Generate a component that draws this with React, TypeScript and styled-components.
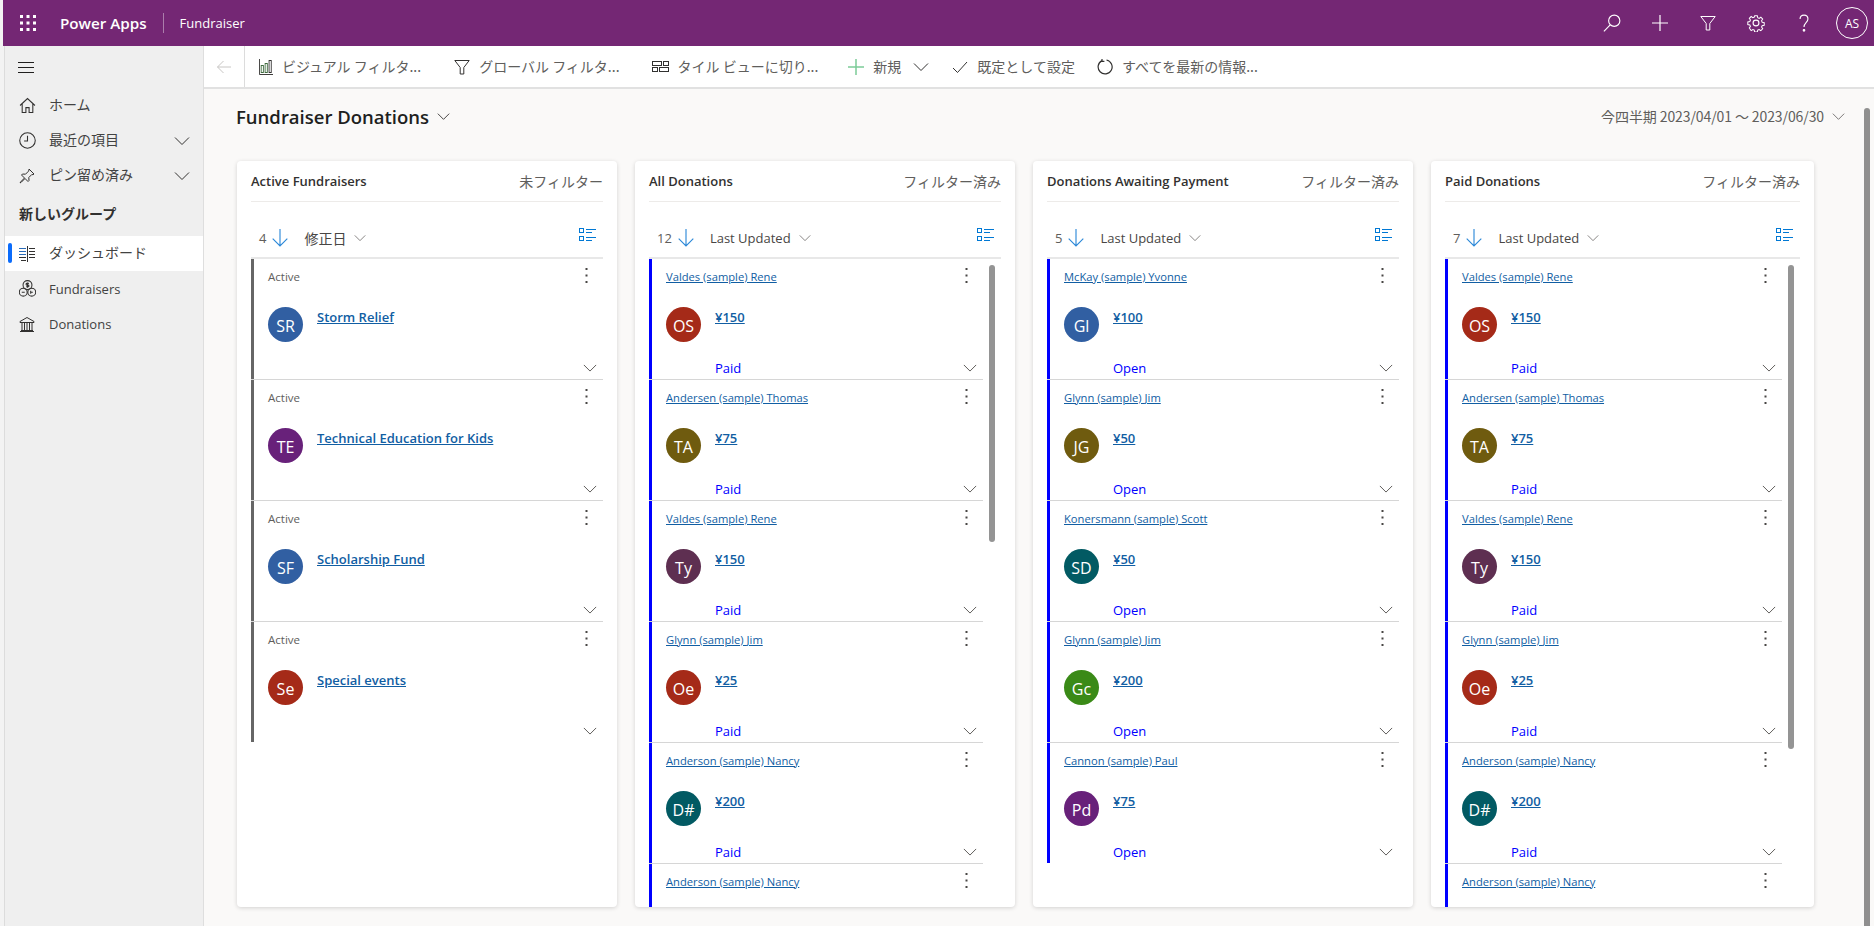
import React from "react";
import styled, { createGlobalStyle } from "styled-components";

const LATIN = `"Open Sans", "Noto Sans CJK JP", sans-serif`;
const JP = `"Noto Sans CJK JP", "Open Sans", sans-serif`;

const GlobalStyle = createGlobalStyle`
  html, body {
    margin: 0;
    padding: 0;
    height: 100%;
    overflow: hidden;
  }
  #root {
    height: 100%;
  }
  * {
    box-sizing: border-box;
  }
`;

const Page = styled.div`
  display: flex;
  flex-direction: column;
  height: 926px;
  padding-left: 4px;
  background: #f3f3f3;
  font-family: ${LATIN};
  color: #323130;
`;

const TopBar = styled.header`
  display: flex;
  align-items: center;
  flex: 0 0 46px;
  margin-left: -1px;
  padding: 0 6px 0 17px;
  background: #742774;
  color: #fff;
`;

const Waffle = styled.svg`
  width: 16px;
  height: 16px;
  margin-right: 24px;
`;

const Brand = styled.div`
  font-size: 15.2px;
  font-weight: 600;
  padding-right: 16px;
  line-height: 20px;
  border-right: 1px solid rgba(255, 255, 255, 0.4);
`;

const AppName = styled.div`
  font-size: 13px;
  margin-left: 16px;
  flex: 1;
`;

const HeaderButton = styled.div`
  display: flex;
  align-items: center;
  justify-content: center;
  width: 48px;
  height: 46px;
`;

const UserBadge = styled.div`
  display: flex;
  align-items: center;
  justify-content: center;
  width: 32px;
  height: 32px;
  margin-left: 8px;
  border: 1px solid #fff;
  border-radius: 50%;
  font-size: 12px;
`;

const Body = styled.div`
  display: flex;
  flex: 1;
  min-height: 0;
`;

const SideNav = styled.nav`
  flex: 0 0 200px;
  background: #efefef;
  border-left: 1px solid #dcdcdc;
  border-right: 1px solid #dedede;
`;

const MenuRow = styled.div`
  display: flex;
  align-items: center;
  height: 42px;
  padding-left: 13px;
`;

const NavRow = styled.div<{ $active?: boolean }>`
  position: relative;
  display: flex;
  align-items: center;
  height: 35px;
  padding: 0 13px;
  background: ${(p) => (p.$active ? "#fff" : "transparent")};
  &::before {
    content: "";
    display: ${(p) => (p.$active ? "block" : "none")};
    position: absolute;
    left: 3px;
    top: 7px;
    width: 4px;
    height: 20px;
    border-radius: 2px;
    background: #0b6cfb;
  }
`;

const NavIcon = styled.span`
  display: flex;
  align-items: center;
  justify-content: center;
  width: 18px;
  margin-right: 13px;
  color: #323130;
`;

const NavLabel = styled.span<{ $jp?: boolean }>`
  flex: 1;
  padding-bottom: ${(p) => (p.$jp ? "3px" : "0")};
  font-family: ${(p) => (p.$jp ? JP : LATIN)};
  font-size: ${(p) => (p.$jp ? "14px" : "13px")};
  color: #424242;
`;

const NavGroupTitle = styled.div`
  display: flex;
  align-items: center;
  height: 43px;
  padding: 0 0 3px 14px;
  font-family: ${JP};
  font-size: 14px;
  font-weight: 700;
  color: #323130;
`;

const Main = styled.main`
  position: relative;
  display: flex;
  flex-direction: column;
  flex: 1;
  min-width: 0;
  background: #faf9f8;
`;

const CommandBar = styled.div`
  display: flex;
  align-items: center;
  flex: 0 0 43px;
  background: #fff;
  border-bottom: 2px solid #e1e1e1;
`;

const BackButton = styled.div`
  display: flex;
  align-items: center;
  justify-content: center;
  width: 41px;
  height: 41px;
  margin-right: 14px;
  border-right: 1px solid #dcdcdc;
  color: #c8c6c4;
`;

const CommandButton = styled.div<{ $after: number }>`
  display: flex;
  align-items: center;
  gap: 9px;
  margin-right: ${(p) => p.$after}px;
  white-space: nowrap;
`;

const CommandLabel = styled.span`
  padding-bottom: 2px;
  font-family: ${JP};
  font-size: 14px;
  color: #605e5c;
`;

const CommandIcon = styled.span`
  display: flex;
  color: #323130;
`;

const Content = styled.div`
  display: flex;
  flex-direction: column;
  flex: 1;
  min-height: 0;
  padding-left: 33px;
`;

const DashHeader = styled.div`
  display: flex;
  align-items: center;
  justify-content: space-between;
  flex: 0 0 72px;
  padding: 0 29px 18px 0;
`;

const DashTitle = styled.div`
  display: flex;
  align-items: center;
  gap: 8px;
  margin-left: -1px;
  font-size: 18.5px;
  font-weight: 600;
  color: #201f1e;
`;

const DateRange = styled.div`
  display: flex;
  align-items: center;
  gap: 8px;
  font-family: ${JP};
  font-size: 14px;
  letter-spacing: -0.1px;
  color: #605e5c;
`;

const Board = styled.div`
  display: grid;
  grid-template-columns: repeat(3, 380px) 383px;
  gap: 18px;
  height: 746px;
`;

const Card = styled.section`
  display: flex;
  flex-direction: column;
  min-width: 0;
  padding: 0 14px;
  background: #fff;
  border-radius: 4px;
  box-shadow: 0 1px 4px rgba(0, 0, 0, 0.16);
  overflow: hidden;
`;

const CardHead = styled.div`
  display: flex;
  align-items: center;
  justify-content: space-between;
  flex: 0 0 41px;
  border-bottom: 1px solid #edebe9;
`;

const CardTitle = styled.div`
  font-size: 13px;
  font-weight: 600;
  color: #323130;
`;

const FilterState = styled.div`
  font-family: ${JP};
  font-size: 14px;
  color: #605e5c;
`;

const SortRow = styled.div`
  display: flex;
  align-items: center;
  flex: 0 0 57px;
  padding: 16px 7px 0 8px;
  border-bottom: 2px solid #e8e8e8;
  font-size: 13px;
`;

const SortCount = styled.span`
  color: #605e5c;
  margin-right: 5px;
`;

const SortArrow = styled.span`
  display: flex;
  color: #2b88d8;
  margin-right: 15px;
`;

const SortField = styled.span<{ $jp?: boolean }>`
  font-family: ${(p) => (p.$jp ? JP : LATIN)};
  font-size: ${(p) => (p.$jp ? "14px" : "13px")};
  color: #484644;
  margin-right: 8px;
`;

const SortChevron = styled.span`
  display: flex;
  flex: 1;
  color: #605e5c;
`;

const ViewToggle = styled.span`
  display: flex;
  margin-top: -6px;
  color: #0078d4;
`;

const List = styled.div<{ $scroll?: boolean }>`
  position: relative;
  flex: 1;
  min-height: 0;
  padding-right: ${(p) => (p.$scroll ? "18px" : "0")};
`;

const ScrollThumb = styled.div<{ $height: number }>`
  position: absolute;
  top: 6px;
  right: 6px;
  width: 6px;
  height: ${(p) => p.$height}px;
  border-radius: 3px;
  background: #949494;
`;

const Item = styled.article`
  height: 121px;
  border-bottom: 1px solid #d6d6d6;
  &:last-of-type {
    border-bottom: none;
  }
`;

const ItemBody = styled.div<{ $accent: string }>`
  height: 120px;
  padding: 0 6px 0 14px;
  border-left: 3px solid ${(p) => p.$accent};
`;

const ItemTop = styled.div`
  display: flex;
  align-items: center;
  justify-content: space-between;
  height: 34px;
  padding-right: 9px;
`;

const StateText = styled.span`
  font-size: 11.5px;
  color: #605e5c;
`;

const OwnerLink = styled.a`
  font-size: 11.2px;
  color: #115ea3;
  text-decoration: underline;
`;

const Kebab = styled.svg`
  width: 3px;
  height: 15px;
  margin-top: -2px;
  color: #484644;
`;

const ItemMiddle = styled.div`
  display: flex;
  gap: 14px;
  height: 35px;
  margin-top: 14px;
`;

const Avatar = styled.div<{ $bg: string }>`
  display: flex;
  align-items: center;
  justify-content: center;
  flex: 0 0 35px;
  height: 35px;
  border-radius: 50%;
  background: ${(p) => p.$bg};
  color: #fff;
  font-size: 16px;
  padding-top: 2px;
`;

const MainLink = styled.a`
  font-size: 13px;
  font-weight: 600;
  line-height: 20px;
  color: #115ea3;
  text-decoration: underline;
  height: 20px;
`;

const ItemBottom = styled.div`
  display: flex;
  align-items: center;
  justify-content: flex-end;
  height: 24px;
  margin-top: 14px;
  color: #484644;
`;

const StatusText = styled.span`
  flex: 1;
  margin-left: 49px;
  font-size: 13px;
  color: #0000ff;
`;

const PageScroll = styled.div`
  position: absolute;
  top: 62px;
  right: 4px;
  bottom: 0;
  width: 6px;
  border-radius: 3px 3px 0 0;
  background: #8f8f8f;
`;

type IconProps = { size?: number };

const Line = ({ size = 16, children }: IconProps & { children: React.ReactNode }) => (
  <svg width={size} height={size} viewBox="0 0 16 16" fill="none" stroke="currentColor" strokeWidth="1">
    {children}
  </svg>
);

const ChevronDown = ({ size = 16 }: IconProps) => (
  <Line size={size}>
    <path d="M1 4.5l7 7 7-7" />
  </Line>
);

const WaffleIcon = () => (
  <Waffle viewBox="0 0 16 16" fill="currentColor">
    {[0, 6.5, 13].map((y) =>
      [0, 6.5, 13].map((x) => <rect key={`${x}-${y}`} x={x} y={y} width="3" height="3" />)
    )}
  </Waffle>
);

const HamburgerIcon = () => (
  <svg width="16" height="12" viewBox="0 0 16 12" stroke="#201f1e" strokeWidth="1">
    <path d="M0 1.5h16M0 6.5h16M0 11.5h16" />
  </svg>
);

const HomeIcon = () => (
  <Line size={17}>
    <path d="M1 8l7-6.5L15 8M3 6.5v8h3.5v-4.5h3v4.5H13v-8" />
  </Line>
);

const ClockIcon = () => (
  <Line size={17}>
    <circle cx="8" cy="8" r="7.3" />
    <path d="M8 3.5V8.5H4.8" />
  </Line>
);

const PinIcon = () => (
  <Line>
    <path d="M10 1l5 5-1 .7-1.2-.2-3 3 .2 3-1 1-3-3-3.5 3.5L1 15l1-1.5L5.5 10l-3-3 1-1 3 .2 3-3L10 2z" />
  </Line>
);

const DashboardIcon = () => (
  <svg width="16" height="16" viewBox="0 0 16 16" fill="none" strokeWidth="1">
    <path d="M8.5 0v16" stroke="#323130" />
    <path d="M0 2.5h7M0 5.5h7M0 8.5h7" stroke="#2b6cb8" />
    <path d="M10 2.5h6M10 5.5h6M10 8.5h6M10 11.5h6" stroke="#323130" />
    <path d="M0 11.5h7M2 14.5h5" stroke="#323130" />
  </svg>
);

const FundraiserIcon = () => (
  <Line size={17}>
    <circle cx="8" cy="4.8" r="4.2" />
    <circle cx="4" cy="11.5" r="3.7" />
    <circle cx="12" cy="11.5" r="3.7" />
    <path d="M9.3 3.2H7.4c-1 0-1 1.6 0 1.6h1.2c1 0 1 1.6 0 1.6H6.7M8 2.4v4.8M2.6 11.5h2.8M11 10v3M11 11.5h2" />
  </Line>
);

const BankIcon = () => (
  <Line>
    <path d="M1 5.5L8 1.5l7 4v1H1zM2 14.5h12M1 15.5h14M3 7v7M5.5 7v7M8 7v7M10.5 7v7M13 7v7" />
  </Line>
);

const BackIcon = () => (
  <Line>
    <path d="M15 8H1.5M7.5 2L1.5 8l6 6" />
  </Line>
);

const BarsIcon = () => (
  <svg width="14" height="16" viewBox="0 0 16 16" fill="none" stroke="#323130" strokeWidth="1" preserveAspectRatio="none">
    <path d="M0.5 0v15.5H16" />
    <rect x="2.5" y="6.5" width="2.5" height="7" stroke="#3f6b3f" />
    <rect x="7" y="4.5" width="2.5" height="9" stroke="#3f6b3f" />
    <rect x="11.5" y="1.5" width="2.5" height="12" />
  </svg>
);

const FilterIcon = () => (
  <Line>
    <path d="M0.8 1.5h14.4L9.8 8.5v6.5H6.2V8.5z" />
  </Line>
);

const TileIcon = () => (
  <svg width="17" height="11" viewBox="0 0 17 11" fill="none" stroke="currentColor" strokeWidth="1">
    <rect x="0.5" y="0.5" width="9" height="4" />
    <rect x="11.5" y="0.5" width="5" height="4" />
    <rect x="0.5" y="6.5" width="5" height="4" />
    <rect x="7.5" y="6.5" width="9" height="4" />
  </svg>
);

const PlusIcon = () => (
  <svg width="16" height="16" viewBox="0 0 16 16" stroke="#7ccb98" strokeWidth="1.5">
    <path d="M8 0v16M0 8h16" />
  </svg>
);

const CheckIcon = () => (
  <Line>
    <path d="M1 9l4.5 4.5L15 3" />
  </Line>
);

const RefreshIcon = () => (
  <Line>
    <path d="M5 1.6A7 7 0 1 0 9.5 1M5 0v2.4h2.4" strokeWidth="1.2" />
  </Line>
);

const SearchIcon = () => (
  <Line size={18}>
    <circle cx="10" cy="6" r="5" />
    <path d="M6.4 9.6L0.8 15.4" />
  </Line>
);

const GearIcon = () => (
  <Line size={18}>
    <circle cx="8" cy="8" r="2.6" />
    <path d="M6.7 .8h2.6l.4 2 1.4.6 1.7-1.1 1.8 1.8-1.1 1.7.6 1.4 2 .4v2.6l-2 .4-.6 1.4 1.1 1.7-1.8 1.8-1.7-1.1-1.4.6-.4 2H6.7l-.4-2-1.4-.6-1.7 1.1L1.4 13l1.1-1.7-.6-1.4-2-.4V6.9l2-.4.6-1.4L1.4 3.4 3.2 1.6l1.7 1.1 1.4-.6z" transform="translate(.8 .8) scale(.9)" />
  </Line>
);

const HelpIcon = () => (
  <Line size={18}>
    <path d="M4.5 4.5C4.5 2.5 6 1 8 1s3.5 1.5 3.5 3.5c0 3-3.5 3.5-3.5 7" />
    <circle cx="8" cy="14.5" r=".7" fill="currentColor" />
  </Line>
);

const ArrowDownIcon = () => (
  <Line size={18}>
    <path d="M8 0v15M1.5 8.5L8 15l6.5-6.5" />
  </Line>
);

const ListToggleIcon = () => (
  <svg width="17" height="13" viewBox="0 0 17 13" fill="none" stroke="currentColor" strokeWidth="1">
    <rect x="0.5" y="0.5" width="4" height="4" />
    <rect x="0.5" y="8.5" width="4" height="4" />
    <path d="M7 1.5h10M7 4.5h6M7 9.5h10M7 12.5h6" />
  </svg>
);

const KebabIcon = () => (
  <Kebab viewBox="0 0 3 15" fill="currentColor">
    <rect x="0.5" y="0" width="2" height="2" />
    <rect x="0.5" y="6.5" width="2" height="2" />
    <rect x="0.5" y="13" width="2" height="2" />
  </Kebab>
);

const BLUE = "#315fa2";
const PURPLE = "#68217a";
const RED = "#a52a18";
const OLIVE = "#6f5b0f";
const PLUM = "#5e2f51";
const TEAL = "#025a63";
const GREEN = "#3a8a17";

// a row without initials is the one cut by the card's bottom edge: only its top line shows
type Row = { top: string; topLink: boolean; initials?: string; color?: string; main?: string; status?: string };

const fundraisers: Row[] = [
  { top: "Active", topLink: false, initials: "SR", color: BLUE, main: "Storm Relief" },
  { top: "Active", topLink: false, initials: "TE", color: PURPLE, main: "Technical Education for Kids" },
  { top: "Active", topLink: false, initials: "SF", color: BLUE, main: "Scholarship Fund" },
  { top: "Active", topLink: false, initials: "Se", color: RED, main: "Special events" },
];

const paid: Row[] = [
  { top: "Valdes (sample) Rene", topLink: true, initials: "OS", color: RED, main: "¥150", status: "Paid" },
  { top: "Andersen (sample) Thomas", topLink: true, initials: "TA", color: OLIVE, main: "¥75", status: "Paid" },
  { top: "Valdes (sample) Rene", topLink: true, initials: "Ty", color: PLUM, main: "¥150", status: "Paid" },
  { top: "Glynn (sample) Jim", topLink: true, initials: "Oe", color: RED, main: "¥25", status: "Paid" },
  { top: "Anderson (sample) Nancy", topLink: true, initials: "D#", color: TEAL, main: "¥200", status: "Paid" },
  { top: "Anderson (sample) Nancy", topLink: true },
];

const awaiting: Row[] = [
  { top: "McKay (sample) Yvonne", topLink: true, initials: "Gl", color: BLUE, main: "¥100", status: "Open" },
  { top: "Glynn (sample) Jim", topLink: true, initials: "JG", color: OLIVE, main: "¥50", status: "Open" },
  { top: "Konersmann (sample) Scott", topLink: true, initials: "SD", color: TEAL, main: "¥50", status: "Open" },
  { top: "Glynn (sample) Jim", topLink: true, initials: "Gc", color: GREEN, main: "¥200", status: "Open" },
  { top: "Cannon (sample) Paul", topLink: true, initials: "Pd", color: PURPLE, main: "¥75", status: "Open" },
];

type Column = {
  title: string;
  filter: string;
  count: number;
  field: string;
  jpField?: boolean;
  accent: string;
  rows: Row[];
  thumb?: number;
};

const columns: Column[] = [
  { title: "Active Fundraisers", filter: "未フィルター", count: 4, field: "修正日", jpField: true, accent: "#666666", rows: fundraisers },
  { title: "All Donations", filter: "フィルター済み", count: 12, field: "Last Updated", accent: "#0000ff", rows: paid, thumb: 277 },
  { title: "Donations Awaiting Payment", filter: "フィルター済み", count: 5, field: "Last Updated", accent: "#0000ff", rows: awaiting },
  { title: "Paid Donations", filter: "フィルター済み", count: 7, field: "Last Updated", accent: "#0000ff", rows: paid, thumb: 484 },
];

const commands = [
  { icon: <BarsIcon />, label: "ビジュアル フィルタ...", after: 33 },
  { icon: <FilterIcon />, label: "グローバル フィルタ...", after: 32 },
  { icon: <TileIcon />, label: "タイル ビューに切り...", after: 30 },
];

function BoardCard({ column }: { column: Column }) {
  return (
    <Card>
      <CardHead>
        <CardTitle>{column.title}</CardTitle>
        <FilterState>{column.filter}</FilterState>
      </CardHead>
      <SortRow>
        <SortCount>{column.count}</SortCount>
        <SortArrow>
          <ArrowDownIcon />
        </SortArrow>
        <SortField $jp={column.jpField}>{column.field}</SortField>
        <SortChevron>
          <ChevronDown size={12} />
        </SortChevron>
        <ViewToggle>
          <ListToggleIcon />
        </ViewToggle>
      </SortRow>
      <List $scroll={!!column.thumb}>
        {column.rows.map((row, i) => (
          <Item key={i}>
            <ItemBody $accent={column.accent}>
              <ItemTop>
                {row.topLink ? <OwnerLink>{row.top}</OwnerLink> : <StateText>{row.top}</StateText>}
                <KebabIcon />
              </ItemTop>
              {row.initials && (
                <>
                  <ItemMiddle>
                    <Avatar $bg={row.color!}>{row.initials}</Avatar>
                    <MainLink>{row.main}</MainLink>
                  </ItemMiddle>
                  <ItemBottom>
                    {row.status && <StatusText>{row.status}</StatusText>}
                    <ChevronDown size={14} />
                  </ItemBottom>
                </>
              )}
            </ItemBody>
          </Item>
        ))}
        {column.thumb && <ScrollThumb $height={column.thumb} />}
      </List>
    </Card>
  );
}

export default function App() {
  return (
    <Page>
      <GlobalStyle />
      <TopBar>
        <WaffleIcon />
        <Brand>Power Apps</Brand>
        <AppName>Fundraiser</AppName>
        <HeaderButton>
          <SearchIcon />
        </HeaderButton>
        <HeaderButton>
          <svg width="16" height="16" viewBox="0 0 16 16" stroke="currentColor" strokeWidth="1.2">
            <path d="M8 0v16M0 8h16" />
          </svg>
        </HeaderButton>
        <HeaderButton>
          <FilterIcon />
        </HeaderButton>
        <HeaderButton>
          <GearIcon />
        </HeaderButton>
        <HeaderButton>
          <HelpIcon />
        </HeaderButton>
        <UserBadge>AS</UserBadge>
      </TopBar>
      <Body>
        <SideNav>
          <MenuRow>
            <HamburgerIcon />
          </MenuRow>
          <NavRow>
            <NavIcon>
              <HomeIcon />
            </NavIcon>
            <NavLabel $jp>ホーム</NavLabel>
          </NavRow>
          <NavRow>
            <NavIcon>
              <ClockIcon />
            </NavIcon>
            <NavLabel $jp>最近の項目</NavLabel>
            <ChevronDown />
          </NavRow>
          <NavRow>
            <NavIcon>
              <PinIcon />
            </NavIcon>
            <NavLabel $jp>ピン留め済み</NavLabel>
            <ChevronDown />
          </NavRow>
          <NavGroupTitle>新しいグループ</NavGroupTitle>
          <NavRow $active>
            <NavIcon>
              <DashboardIcon />
            </NavIcon>
            <NavLabel $jp>ダッシュボード</NavLabel>
          </NavRow>
          <NavRow>
            <NavIcon>
              <FundraiserIcon />
            </NavIcon>
            <NavLabel>Fundraisers</NavLabel>
          </NavRow>
          <NavRow>
            <NavIcon>
              <BankIcon />
            </NavIcon>
            <NavLabel>Donations</NavLabel>
          </NavRow>
        </SideNav>
        <Main>
          <CommandBar>
            <BackButton>
              <BackIcon />
            </BackButton>
            {commands.map((c) => (
              <CommandButton key={c.label} $after={c.after}>
                <CommandIcon>{c.icon}</CommandIcon>
                <CommandLabel>{c.label}</CommandLabel>
              </CommandButton>
            ))}
            <CommandButton $after={12}>
              <CommandIcon>
                <PlusIcon />
              </CommandIcon>
              <CommandLabel>新規</CommandLabel>
            </CommandButton>
            <CommandButton $after={23}>
              <CommandIcon>
                <ChevronDown />
              </CommandIcon>
            </CommandButton>
            <CommandButton $after={22}>
              <CommandIcon>
                <CheckIcon />
              </CommandIcon>
              <CommandLabel>既定として設定</CommandLabel>
            </CommandButton>
            <CommandButton $after={0}>
              <CommandIcon>
                <RefreshIcon />
              </CommandIcon>
              <CommandLabel>すべてを最新の情報...</CommandLabel>
            </CommandButton>
          </CommandBar>
          <Content>
            <DashHeader>
              <DashTitle>
                Fundraiser Donations
                <ChevronDown size={13} />
              </DashTitle>
              <DateRange>
                今四半期 2023/04/01 〜 2023/06/30
                <ChevronDown size={13} />
              </DateRange>
            </DashHeader>
            <Board>
              {columns.map((column) => (
                <BoardCard key={column.title} column={column} />
              ))}
            </Board>
          </Content>
          <PageScroll />
        </Main>
      </Body>
    </Page>
  );
}
